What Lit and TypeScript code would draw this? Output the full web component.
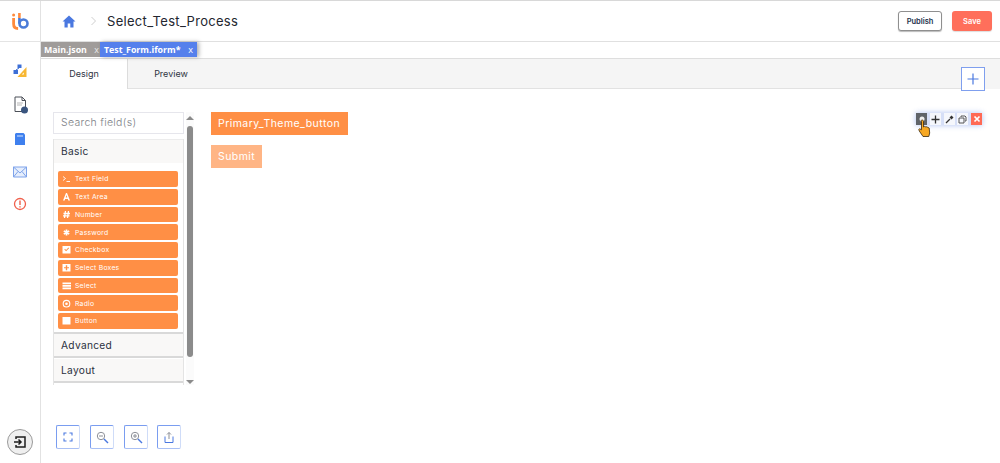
import { LitElement, html, css, svg } from "lit";
import { customElement } from "lit/decorators.js";

const fieldIcons: Record<string, unknown> = {
  term: svg`<path d="M2 3.500l2.500 2-2.500 2M5.500 8.500H9" fill="none" stroke="#fff" stroke-width=".9"/>`,
  font: svg`<path d="M5 2h1l3 7.500H7.300L6.900 8H4.100L3.700 9.500H2zM4.700 6.500h1.600L5.500 4z" fill="#fff"/>`,
  hash: svg`<path d="M4.500 2L3.500 9M7.500 2l-1 7M2.500 4.500h6.500M2 6.800h6.500" fill="none" stroke="#fff" stroke-width="1.300"/>`,
  ast: svg`<path d="M5.500 2.500v6M2.800 4l5.400 3M8.200 4L2.800 7" fill="none" stroke="#fff" stroke-width="1.700"/>`,
  check: svg`<path fill-rule="evenodd" d="M1.500 2h8v7.500h-8zM3.300 5.500l1.800 1.800 3-3-.7-.7-2.300 2.300-1.100-1.100z" fill="#fff"/>`,
  plus: svg`<path fill-rule="evenodd" d="M1.500 2h8v7.500h-8zM4.800 3.300v1.900H3v1.100h1.800v1.900h1.400V6.300H8V5.200H6.200V3.300z" fill="#fff"/>`,
  list: svg`<path d="M1.500 2.500h8.500v1.700H1.500zM1.500 5h8.500v1.700H1.500zM1.500 7.500h8.500v1.700H1.500z" fill="#fff"/>`,
  radio: svg`<circle cx="5.500" cy="5.700" r="3.300" fill="none" stroke="#fff" stroke-width="1.100"/><circle cx="5.500" cy="5.700" r="1.300" fill="#fff"/>`,
  stop: svg`<path d="M1.500 2h8v7.500h-8z" fill="#fff"/>`,
};

const fields: [string, string][] = [
  ["term", "Text Field"],
  ["font", "Text Area"],
  ["hash", "Number"],
  ["ast", "Password"],
  ["check", "Checkbox"],
  ["plus", "Select Boxes"],
  ["list", "Select"],
  ["radio", "Radio"],
  ["stop", "Button"],
];

@customElement("app-root")
export class AppRoot extends LitElement {
  static styles = css`
    :host {
      display: block;
      width: 1000px;
      height: 463px;
      overflow: hidden;
      background: #fff;
      font-family: "Open Sans", "Noto Sans", sans-serif;
      color: #2b2f3a;
    }
    .shell {
      display: grid;
      grid-template-columns: 41px 1fr;
      height: 463px;
      border-top: 1px solid #d8d8d8;
      box-sizing: border-box;
    }
    .rail {
      border-right: 1px solid #e2e2e2;
      display: flex;
      flex-direction: column;
      align-items: center;
      box-sizing: border-box;
      width: 41px;
    }
    .logo {
      width: 40px;
      height: 40px;
      border-bottom: 1px solid #e4e4e4;
      display: flex;
      align-items: center;
      justify-content: center;
      flex: none;
    }
    .rail-icons {
      display: flex;
      flex-direction: column;
      align-items: center;
      padding-top: 22px;
    }
    .rail-icons svg { display: block; }
    .ri-1 { margin-bottom: 18px; }
    .ri-2 { margin-bottom: 18px; margin-left: 1px; }
    .ri-3 { margin-bottom: 20px; }
    .ri-4 { margin-bottom: 19px; }
    .exit {
      margin-top: auto;
      margin-bottom: 8px;
      width: 24px;
      height: 24px;
      border-radius: 50%;
      border: 1px solid #9a9a9a;
      background: #efefef;
      display: flex;
      align-items: center;
      justify-content: center;
    }
    .main { display: flex; flex-direction: column; min-width: 0; }
    .top {
      height: 40px;
      border-bottom: 1px solid #e0e0e0;
      display: flex;
      align-items: center;
      padding: 0 8px 0 21px;
      flex: none;
    }
    .crumb { margin-left: 14px; margin-right: 10px; display: block; }
    .title { font-size: 13px; letter-spacing: 0.3px; color: #23262f; font-family: "Inter", sans-serif; font-weight: 400; }
    .actions { margin-left: auto; display: flex; gap: 10px; }
    .btn {
      height: 20px;
      border-radius: 3px;
      font-size: 7.5px;
      font-weight: 600;
      display: flex;
      align-items: center;
      justify-content: center;
      font-family: "Inter", sans-serif;
      box-sizing: border-box;
    }
    .publish { width: 44px; border: 1px solid #8f8f8f; background: #fff; box-shadow: 0 1px 1px #bbb; color: #22304a; }
    .save { width: 40px; background: #ff6f5b; color: #fff; box-shadow: 0 1px 1px #ddd; }
    .filetabs { height: 16px; display: flex; flex: none; font-size: 8.8px; font-weight: 700; color: #fff; }
    .ft { display: flex; align-items: center; height: 15px; padding-left: 3px; box-sizing: border-box; }
    .ft.off { width: 59px; background: #a09c9a; }
    .ft.on { width: 97px; background: #5580ec; padding-left: 4px; box-shadow: 2px 0 4px rgba(80, 80, 80, .45); position: relative; }
    .ft .x { margin-left: auto; margin-right: 4px; font-weight: 400; font-size: 9px; }
    .ft.off .x { color: #e8e8e8; margin-right: 1px; }
    .workspace { flex: 1; display: flex; flex-direction: column; min-height: 0; }
    .tabbar {
      height: 31px;
      flex: none;
      display: flex;
      border-top: 1px solid #dedede;
      background: #f5f5f5;
      box-sizing: border-box;
      padding-right: 15px;
    }
    .tab {
      font-size: 9px;
      font-family: "Inter", sans-serif;
      display: flex;
      align-items: center;
      justify-content: center;
      height: 30px;
      box-sizing: border-box;
      padding-bottom: 1px;
      color: #2e3442;
    }
    .tab.a { width: 87px; background: #fff; border-right: 1px solid #dcdcdc; }
    .tab.b { width: 86px; border-bottom: 1px solid #e2e2e2; }
    .tabfill { flex: 1; border-bottom: 1px solid #e2e2e2; height: 30px; box-sizing: border-box; }
    .addbtn {
      width: 24px;
      height: 24px;
      margin-top: 8px;
      background: #fff;
      border: 1px solid #7f9fee;
      box-sizing: border-box;
      display: flex;
      align-items: center;
      justify-content: center;
      position: relative;
      z-index: 1;
    }
    .canvas {
      flex: 1;
      display: flex;
      padding: 23px 18px 0 12px;
      min-height: 0;
      position: relative;
    }
    .palette { width: 141px; flex: none; display: flex; flex-direction: column; }
    .palette-body { display: flex; gap: 2px; height: 273px; flex: none; }
    .col { width: 131px; flex: none; display: flex; flex-direction: column; }
    .search {
      height: 22px;
      flex: none;
      border: 1px solid #e6e6ec;
      box-sizing: border-box;
      font-size: 10.5px;
      color: #7d7f86;
      display: flex;
      align-items: center;
      padding: 0 0 1px 7px;
      letter-spacing: .3px;
      font-family: "Inter", sans-serif;
      font-weight: 300;
    }
    .acc { margin-top: 5px; flex: 1; display: flex; flex-direction: column; overflow: hidden; border-left: 1px solid #e4e4e4; border-right: 1px solid #e4e4e4; }
    .acc-h {
      height: 24px;
      flex: none;
      background: #f9f8f7;
      box-sizing: border-box;
      display: flex;
      align-items: center;
      padding-left: 7px;
      font-size: 10.2px;
      letter-spacing: .3px;
      color: #2a3040;
      border-bottom: 2px solid #d9d9d9;
      font-family: "Inter", sans-serif;
    }
    .acc-h.basic { border-bottom: none; border-top: 1px solid #ececec; padding-bottom: 2px; }
    .acc-h + .acc-h { margin-top: 1px; }
    .list { padding: 8px 5px 3px 4px; display: flex; flex-direction: column; gap: 2px; border-bottom: 2px solid #d9d9d9; flex: none; background: #fff; }
    .field {
      height: 15.750px;
      background: #ff8f45;
      border-radius: 2px;
      display: flex;
      align-items: center;
      color: #fff;
      font-size: 6.8px;
      padding-left: 3px;
      gap: 3px;
      font-family: "Inter", sans-serif;
      letter-spacing: .25px;
    }
    .field svg { flex: none; display: block; }
    .sb { width: 8px; display: flex; flex-direction: column; align-items: center; background: #fbfbfb; }
    .sb .up, .sb .down { width: 0; height: 0; border-left: 4px solid transparent; border-right: 4px solid transparent; flex: none; }
    .sb .up { border-bottom: 4px solid #8b8b8b; margin-top: 4px; }
    .sb .down { border-top: 4px solid #8b8b8b; margin-bottom: 1px; }
    .sb .thumb { width: 6px; background: #8b8b8b; border-radius: 3px; height: 231px; margin-top: 6px; margin-bottom: auto; }
    .zoom { display: flex; margin-top: 40px; padding-left: 3px; gap: 10px; }
    .zb {
      width: 24px;
      height: 24px;
      box-sizing: border-box;
      border: 1px solid #7a9df0;
      border-right-color: #cfdcf8;
      border-bottom-color: #a9c0f5;
      border-radius: 2px;
      display: flex;
      align-items: center;
      justify-content: center;
    }
    .zb.last { margin-left: -1px; }
    .form { margin-left: 17px; display: flex; flex-direction: column; align-items: flex-start; gap: 10px; }
    .fb {
      height: 23px;
      background: #ff8f45;
      color: #fff;
      display: flex;
      align-items: center;
      padding: 0 7px;
      font-size: 10.5px;
      letter-spacing: .45px;
      font-family: "Inter", sans-serif;
      box-sizing: border-box;
    }
    .fb.one { width: 137px; }
    .fb.dis { opacity: .65; width: 51px; }
    .tools { margin-left: auto; margin-top: 1px; position: relative; height: 12px; display: flex; gap: 2.750px; box-shadow: 0 0 5px 1px rgba(120, 150, 230, .45); background: rgba(120, 150, 230, .3); border-radius: 2px; }
    .t { width: 11px; height: 12px; background: #f5f7fc; display: flex; align-items: center; justify-content: center; }
    .t.g { background: #5f6368; }
    .t.r { background: #ff6a55; }
    .hand { position: absolute; left: 2px; top: 6px; z-index: 2; display: block; }
  `;

  render() {
    return html`<div class="shell">
      <aside class="rail">
        <div class="logo">
          <svg width="18" height="18" viewBox="0 0 18 18">
            <circle cx="2.600" cy="3" r="1.500" fill="#ff8a3c"/>
            <path d="M2.600 6v6c0 3 2 4.500 4.500 4.500" fill="none" stroke="#ff8a3c" stroke-width="2.800"/>
            <path d="M8.400 1v5" fill="none" stroke="#ff8a3c" stroke-width="2.600"/>
            <path d="M8.400 6v5.500" fill="none" stroke="#4a7bd8" stroke-width="2.600"/>
            <circle cx="12.500" cy="11.500" r="4" fill="none" stroke="#4a7bd8" stroke-width="2.600"/>
          </svg>
        </div>
        <div class="rail-icons">
          <svg class="ri-1" width="14" height="14" viewBox="0 0 14 14">
            <path d="M4.500.5h4v3.500h-4z" fill="#3d6fd6"/>
            <path d="M.5 6h4.500v4H.5z" fill="#3d6fd6"/>
            <path d="M3 6l3-2" stroke="#3d6fd6" fill="none"/>
            <path d="M13.500 3v10H4.500z" fill="#f7b733"/>
            <path d="M10.800 8.500v2h-2z" fill="#fff"/>
          </svg>
          <svg class="ri-2" width="14" height="18" viewBox="0 0 14 18">
            <path d="M1 1h7l3.500 3.500V12M8 15.500H1V1M8 1v3.500h3.500" fill="#fff" stroke="#4c5058" stroke-width="1"/>
            <path d="M3 7h6M3 9h5" stroke="#b5b5b5" fill="none"/>
            <circle cx="10.500" cy="14" r="3.500" fill="#3a557f"/>
          </svg>
          <svg class="ri-3" width="12" height="14" viewBox="0 0 12 14">
            <path d="M2 1h7.500l1.500 1.500V13H1V2z" fill="#3f80ee"/>
            <path d="M4 3v2M6 3v2M8 3v2" stroke="#fff" fill="none" stroke-width=".8"/>
          </svg>
          <svg class="ri-4" width="14" height="12" viewBox="0 0 14 12">
            <path d="M.500 1h13v10H.500z" fill="#e6eefc" stroke="#7ea3ea"/>
            <path d="M.500 1L7 7l6.500-6M.500 11L5 5.500M13.500 11L9 5.500" fill="none" stroke="#7ea3ea"/>
          </svg>
          <svg width="14" height="14" viewBox="0 0 14 14">
            <circle cx="7" cy="7" r="5.500" fill="none" stroke="#f0604c" stroke-width="1.300"/>
            <path d="M7 3.500v4.500M7 9.300v1.300" stroke="#f0604c" stroke-width="1.400" fill="none"/>
          </svg>
        </div>
        <div class="exit">
          <svg width="14" height="14" viewBox="0 0 14 14">
            <path d="M3 4V2h9v10H3v-2" fill="none" stroke="#1e1e1e" stroke-width="1.500"/>
            <path d="M1 7h6.500M5.500 4.500L8 7l-2.500 2.500" fill="none" stroke="#1e1e1e" stroke-width="1.500"/>
          </svg>
        </div>
      </aside>
      <div class="main">
        <header class="top">
          <svg width="14" height="13" viewBox="0 0 14 13">
            <path d="M7 .5L.5 6.500h2V12.500h3.200V8.500h2.600v4h3.200V6.500h2z" fill="#4a78e0"/>
          </svg>
          <svg class="crumb" width="7" height="10" viewBox="0 0 7 10">
            <path d="M1.500 1l4 4-4 4" fill="none" stroke="#cfcfcf" stroke-width="1"/>
          </svg>
          <span class="title">Select_Test_Process</span>
          <div class="actions">
            <div class="btn publish">Publish</div>
            <div class="btn save">Save</div>
          </div>
        </header>
        <div class="filetabs">
          <div class="ft off">Main.json<span class="x">x</span></div>
          <div class="ft on">Test_Form.iform*<span class="x">x</span></div>
        </div>
        <div class="workspace">
          <div class="tabbar">
            <div class="tab a">Design</div>
            <div class="tab b">Preview</div>
            <div class="tabfill"></div>
            <div class="addbtn">
              <svg width="12" height="12" viewBox="0 0 12 12"><path d="M6 .5v11M.5 6h11" stroke="#4a78e0" stroke-width="1.200" fill="none"/></svg>
            </div>
          </div>
          <div class="canvas">
            <div class="palette">
              <div class="palette-body">
                <div class="col">
                  <div class="search">Search field(s)</div>
                  <div class="acc">
                    <div class="acc-h basic">Basic</div>
                    <div class="list">
                      ${fields.map(
                        ([i, t]) => html`<div class="field">
                          <svg width="11" height="11" viewBox="0 0 11 11">${fieldIcons[i]}</svg>${t}
                        </div>`
                      )}
                    </div>
                    <div class="acc-h">Advanced</div>
                    <div class="acc-h">Layout</div>
                  </div>
                </div>
                <div class="sb">
                  <div class="up"></div>
                  <div class="thumb"></div>
                  <div class="down"></div>
                </div>
              </div>
              <div class="zoom">
                <div class="zb"><svg width="12" height="12" viewBox="0 0 12 12"><path d="M2 4.500V2h2.500M7.500 2H10v2.500M10 7.500V10H7.500M4.500 10H2V7.500" fill="none" stroke="#4a78e0" stroke-width="1.100"/></svg></div>
                <div class="zb"><svg width="13" height="13" viewBox="0 0 13 13"><circle cx="5" cy="5" r="3.700" fill="none" stroke="#8d9098"/><path d="M3 5h4" stroke="#8d9098"/><path d="M8 8l4 4" stroke="#4a78e0" stroke-width="1.500"/></svg></div>
                <div class="zb"><svg width="13" height="13" viewBox="0 0 13 13"><circle cx="5" cy="5" r="3.700" fill="none" stroke="#8d9098"/><path d="M3 5h4M5 3v4" stroke="#8d9098"/><path d="M8 8l4 4" stroke="#4a78e0" stroke-width="1.500"/></svg></div>
                <div class="zb last"><svg width="12" height="13" viewBox="0 0 12 13"><path d="M2 5.500v6h8v-6" fill="none" stroke="#4a78e0"/><path d="M6 8V1.500M4 3.500l2-2 2 2" fill="none" stroke="#8d9098"/></svg></div>
              </div>
            </div>
            <div class="form">
              <div class="fb one">Primary_Theme_button</div>
              <div class="fb dis">Submit</div>
            </div>
            <div class="tools">
              <div class="t g"><svg width="8" height="8" viewBox="0 0 8 8"><circle cx="4" cy="4" r="2.500" fill="#eee"/></svg></div>
              <div class="t"><svg width="9" height="9" viewBox="0 0 9 9"><path d="M4.500.5v8M.5 4.500h8" stroke="#333" stroke-width="1.300" fill="none"/></svg></div>
              <div class="t"><svg width="9" height="9" viewBox="0 0 9 9"><path d="M1 8l4-4" stroke="#333" stroke-width="1.300" fill="none"/><path d="M4.500 2.500l2-2 2 2-2 2z" fill="#333"/></svg></div>
              <div class="t"><svg width="9" height="9" viewBox="0 0 9 9"><path d="M3 2V1h4l1 1v4H7M1 3h5v5H1z" stroke="#555" fill="none"/></svg></div>
              <div class="t r"><svg width="8" height="8" viewBox="0 0 8 8"><path d="M1.500 1.500l5 5M6.500 1.500l-5 5" stroke="#fff" stroke-width="1.700" fill="none"/></svg></div>
              <svg class="hand" width="14" height="18" viewBox="0 0 14 18">
                <path d="M4 1c1 0 1.500.6 1.500 1.500V8l1-.6 1 .4 1.200 0 1 .5 1.500.7.500 5L10.800 17.500H5L1.300 12 .800 10.500l.7-.8 2 1.100V2.500C3 1.600 3.200 1 4 1z" fill="#f7a823" stroke="#3a2a10" stroke-width=".8"/>
              </svg>
            </div>
          </div>
        </div>
      </div>
    </div>`;
  }
}
